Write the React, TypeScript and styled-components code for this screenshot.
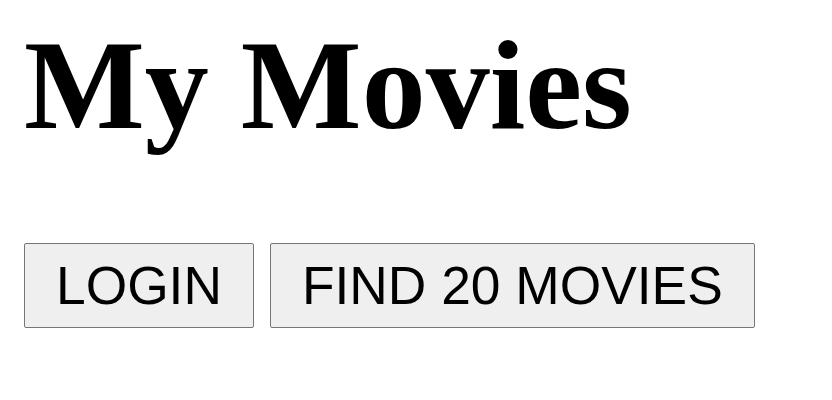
import React from "react";
import styled, { createGlobalStyle } from "styled-components";

const Global = createGlobalStyle`
  html, body { margin: 0; padding: 0; background: #ffffff; }
`;

const Page = styled.main`
  padding: 12px 24px;
  display: flex;
  flex-direction: column;
`;

const Title = styled.h1`
  margin: 0;
  font-family: "Liberation Serif", "Times New Roman", serif;
  font-weight: bold;
  font-size: 128px;
  line-height: normal;
  color: #000;
`;

const Actions = styled.div`
  margin-top: 84px;
  display: flex;
  gap: 16px;
`;

const Button = styled.button`
  font-family: "Liberation Sans", Arial, sans-serif;
  font-size: 53.33px;
  line-height: normal;
  padding: 11.2px 31px;
  color: #000;
  background: #efefef;
  border: 1px solid #767676;
  border-radius: 2px;
`;

export default function App() {
  return (
    <>
      <Global />
      <Page>
        <Title>My Movies</Title>
        <Actions>
          <Button>LOGIN</Button>
          <Button>FIND 20 MOVIES</Button>
        </Actions>
      </Page>
    </>
  );
}
